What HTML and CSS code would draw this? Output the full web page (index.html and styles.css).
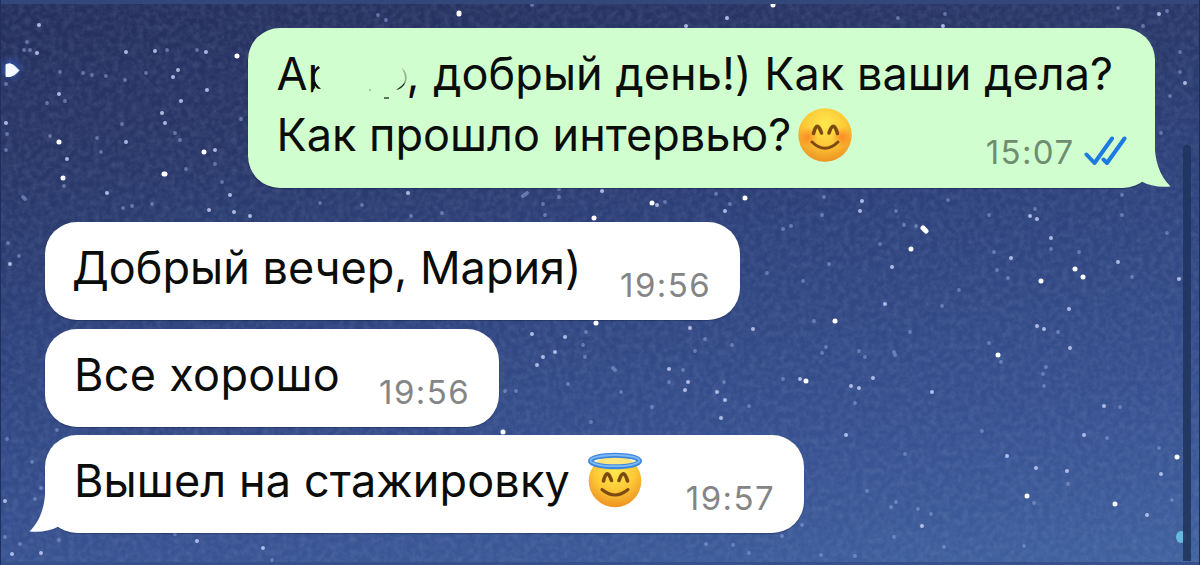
FILE: index.html
```
<!DOCTYPE html>
<html lang="ru">
<head>
    <meta charset="UTF-8">
    <meta name="viewport" content="width=device-width, initial-scale=1.0">
    <title>Chat</title>
    <link rel="stylesheet" href="styles.css">
</head>
<body>
    <svg class="sky" viewBox="0 0 1200 565">
        <defs>
            <filter id="grain" x="0" y="0" width="100%" height="100%">
                <feTurbulence type="fractalNoise" baseFrequency="0.16" numOctaves="3" seed="4"/>
                <feColorMatrix values="0 0 0 0 0.4  0 0 0 0 0.48  0 0 0 0 0.7  0.9 0 0 0 -0.3"/>
            </filter>
            <filter id="soft"><feGaussianBlur stdDeviation="0.7"/></filter>
            <filter id="glow" x="-100%" y="-100%" width="300%" height="300%"><feGaussianBlur stdDeviation="3"/></filter>
        </defs>
        <rect width="1200" height="565" filter="url(#grain)" opacity="0.3"/>
        <g filter="url(#soft)">
            <path class="star dim" d="M27 42h0M30 50h0M24 50h0M60 72h0M92 75h0M83 73h0M106 76h0M146 73h0M125 80h0M122 124h0M101 152h0M97 138h0M50 136h0M47 103h0M65 101h0M241 119h0M180 140h0M175 133h0M186 169h0M215 164h0M222 182h0M6 84h0M7 134h0M6 150h0M23 197l2 2M132 206h0M123 208h0M152 204h0M64 186h0M197 50h0M167 50h0M8 243h0M19 256h0M362 205h0M320 203h0M442 213h0M543 204h0M559 197h0M559 189h0M545 215h0M665 202h0M716 194h0M730 204h0M411 216h0M523 196l4 -3M783 229h0M791 226h0M613 368l2 2M586 332h0M583 345h0M652 407h0M591 422h0M749 406h0M724 382h0M669 382h0M683 370h0M783 379h0M705 339h0M695 351h0M732 345h0M505 391h0M516 391h0M621 392h0M568 384h0M585 357h0"/>
            <path class="star dim" d="M824 197h0M822 215h0M896 211h0M904 225h0M916 226h0M948 200h0M989 215h0M1035 209h0M1122 195h0M1122 215h0M1167 233h0M1079 252h0M994 252h0M997 270h0M1008 278h0M1051 249h0M959 290h0M942 306h0M767 273h0M803 281h0M814 321h0M826 347h0M822 353h0M859 351h0M865 357h0M910 332h0M894 352l1 3M989 343h0M1001 362h0M1058 332h0M1046 367h0M1043 374h0M1044 386h0M855 403h0M1120 407h0M982 431h0M1107 438h0M1159 448h0M905 454h0M867 491h0M896 502h0M891 507h0M918 509h0M931 514h0M894 537h0M944 547h0M1024 546h0M782 536h0M802 525h0M749 553h0M855 556h0M821 555h0M1034 503h0M1068 484h0M1172 500h0M1132 277h0M880 244h0M829 264h0M7 439h0M57 430h0M32 462h0M41 488h0M35 499h0M20 544h0M59 540h0M272 560h0M5 537h0M175 534h0M706 544h0M733 545h0M1167 11h0M1143 26h0M1180 52h0M1180 72h0M1170 96h0M1161 133h0M378 15h0M386 20h0M532 5h0M1118 8h0M945 14h0M898 18h0"/>
            <path class="star mid" d="M39 25h0M37 53h0M126 52h0M155 51h0M206 52h0M178 70h0M173 77h0M59 94h0M162 113h0M165 123h0M126 142h0M67 159h0M215 150h0M207 90h0M181 101h0M230 195h0M107 193h0M6 123h0M209 210h0M250 216h0M234 212h0M10 264h0M602 191h0M657 205h0M725 211h0M408 193h0M565 337h0M543 357h0M537 365h0M555 352h0M532 334h0M669 369h0M688 382h0M685 390h0M717 392h0M725 400h0M721 418h0M753 329h0M690 328h0M862 201h0M860 211h0M1011 258h0M1051 238h0M892 267h0M885 304h0M800 379h0M873 378h0M851 386h0M859 388h0M932 392h0M1037 326h0M1044 329h0M1070 348h0M1069 309h0M1104 406h0M1084 435h0M1007 456h0M1067 471h0M1036 468h0M1161 474h0M922 526h0M1147 515h0M846 435h0M1179 279h0M1118 262h0M1037 219h0M1030 216h0M5 501h0M12 554h0M41 553h0M197 541h0M263 548h0M1159 14h0M1185 83h0M727 18h0M686 26h0M943 26h0"/>
            <path class="star bright" d="M164 174l1 0M63 178h0M59 142h0M237 56h0M204 152h0M652 203h0M594 218h0M745 198h0M596 323h0M503 432h0M806 381h0M923 228l3 3M911 249h0M1041 281h0M1075 269h0M1083 277h0M835 321h0M998 355h0M1027 496h0M1115 504h0M1177 457h0M459 13l0 1M773 5h0"/>
        </g>
        <circle cx="11" cy="69" r="9" fill="#2d62c8" opacity="0.6" filter="url(#glow)"/>
        <path d="M6 64.500q4 -2 8 1l5 5l-4 4q-5 3 -9 2z" fill="#f4f8ff" stroke="#f4f8ff" stroke-width="1" stroke-linejoin="round"/>
        <ellipse cx="1181" cy="537" rx="5" ry="6" fill="#6bc3e3" opacity="0.9" filter="url(#soft)"/>
    </svg>
    <div class="edge edge-top"></div>
    <div class="edge edge-bottom"></div>
    <div class="edge edge-left"></div>
    <div class="edge edge-right"></div>
    <div class="scrollbar"></div>

    <div class="chat">
        <div class="mes out">
            <p class="line l1">Ар<span class="erased"><svg viewBox="0 0 90 50" width="90" height="50">
                <path d="M1 8H86V50H-12V38.500L-4 37L-3 33.500L4 34Q-2 29 -2 23Q-2 16 3 13L-1 8z" fill="#d0fecf"/>
                <path d="M84 12Q92 19 89 27Q86 34 79 35Q87 31 88 24Q88 18 84 12z" fill="#8fb58f"/>
                <path d="M88.500 27Q86 33.500 79 35Q85 31 88.500 27z" fill="#1c2a1c"/>
                <path d="M67 43h5" stroke="#3d5a3d" stroke-width="1.600"/>
                <circle cx="53" cy="35" r="0.900" fill="#8db38d"/>
            </svg></span>, <span class="l1b">добрый день!) Как ваши дела?</span></p>
            <p class="line l2">Как прошло интервью?</p>
            <svg class="emoji e1" viewBox="0 0 54 54">
                <defs>
                    <radialGradient id="face" cx="0.5" cy="0.3" r="0.7">
                        <stop offset="0" stop-color="#ffe94f"/>
                        <stop offset="0.55" stop-color="#fdc937"/>
                        <stop offset="1" stop-color="#ee9322"/>
                    </radialGradient>
                    <radialGradient id="blush">
                        <stop offset="0" stop-color="#f8691c" stop-opacity="0.65"/>
                        <stop offset="1" stop-color="#f8691c" stop-opacity="0"/>
                    </radialGradient>
                </defs>
                <circle cx="27" cy="27" r="26.7" fill="url(#face)"/>
                <circle cx="10" cy="29" r="10" fill="url(#blush)"/>
                <circle cx="44" cy="29" r="10" fill="url(#blush)"/>
                <path d="M15.500 25.500Q19 11.500 23.500 25M31 25Q35.500 11.500 39.500 25.500" class="feature"/>
                <path d="M14 34Q27 46.500 40 34" class="feature mouth"/>
            </svg>
            <div class="meta">
                <span class="time">15:07</span>
                <svg class="ticks" viewBox="0 0 44 30" width="44" height="30"><path d="M2.500 18.500L10.500 27L28 2.500M19.500 23.500L23 27L40.500 2.500"/></svg>
            </div>
            <svg class="tail tail-out" viewBox="0 0 32 48" width="32" height="48"><path d="M15.500 0C15.500 20 20 35 31.500 46.500Q14 48 2 41.300L0 10z"/></svg>
        </div>

        <div class="mes in m2">
            <p class="line l3">Добрый вечер, Мария)</p>
            <div class="meta"><span class="time">19:56</span></div>
        </div>
        <div class="mes in m3">
            <p class="line l4">Все хорошо</p>
            <div class="meta"><span class="time">19:56</span></div>
        </div>
        <div class="mes in m4">
            <p class="line l5">Вышел на стажировку</p>
            <svg class="emoji e2" viewBox="0 0 54 56">
                <circle cx="27" cy="29" r="26.300" fill="url(#face)"/>
                <ellipse cx="27" cy="9" rx="24.500" ry="5.800" fill="#fff2a8" fill-opacity="0.6" stroke="#3f86dd" stroke-width="5"/>
                <ellipse cx="27" cy="8.600" rx="24.500" ry="5.600" fill="none" stroke="#7dbbf7" stroke-width="1.800"/>
                <path d="M15.500 29Q19 15 23.500 28.500M31 28.500Q35.500 15 39.500 29" class="feature"/>
                <path d="M14 37.500Q27 48.500 40 37.500" class="feature mouth"/>
            </svg>
            <div class="meta"><span class="time">19:57</span></div>
            <svg class="tail tail-in" viewBox="0 0 32 48" width="32" height="48"><path d="M16.500 0C16.500 20 12 35 0.500 46.500Q18 48 30 41.300L32 10z"/></svg>
        </div>
    </div>
</body>
</html>
```
FILE: styles.css
```
*{
    box-sizing: border-box;
}
body{
    margin: 0;
    width: 1200px;
    height: 565px;
    overflow: hidden;
    position: relative;
    font-family: Inter, "Liberation Sans", sans-serif;
    color: #0a0d0a;
    background: linear-gradient(172deg, #262f5e 0%, #293869 25%, #2f447f 50%, #385392 78%, #40629f 100%);
}
.sky{
    position: absolute;
    top: 0;
    left: 0;
    width: 1200px;
    height: 565px;
}
.star{
    fill: none;
    stroke-linecap: round;
}
.dim{
    stroke: #8b9dd4;
    stroke-width: 3.8px;
    opacity: 0.6;
}
.mid{
    stroke: #c3cdf4;
    stroke-width: 4px;
    opacity: 0.85;
}
.bright{
    stroke: #ffffff;
    stroke-width: 5px;
}

/* thin frame round the wallpaper */
.edge{
    position: absolute;
}
.edge-top{
    top: 0;
    left: 0;
    right: 0;
    height: 4px;
    background: #33477a;
}
.edge-bottom{
    bottom: 0;
    left: 0;
    right: 0;
    height: 3px;
    background: #36508c;
}
.edge-left{
    top: 0;
    bottom: 0;
    left: 0;
    width: 1px;
    background: #1f3060;
}
.edge-right{
    top: 0;
    bottom: 0;
    right: 0;
    width: 1px;
    background: #1c2c5e;
}
.scrollbar{
    position: absolute;
    top: 145px;
    right: 9px;
    width: 8px;
    height: 416px;
    border-radius: 4px 4px 0 0;
    background: #20345f;
    opacity: 0.9;
}

.chat{
    position: relative;
    display: flex;
    flex-direction: column;
    align-items: flex-start;
    padding: 27.5px 45.5px 0 45px;
}
.mes{
    position: relative;
    display: flex;
    border-radius: 32px;
    background: #fff;
    box-shadow: 0 1px 1px rgba(10, 20, 50, 0.35);
}
.in{
    height: 98px;
    padding: 15px 29px 0 29px;
    justify-content: space-between;
}
.out{
    align-self: flex-end;
    width: 907px;
    height: 160px;
    padding: 15px 27px 0 29px;
    flex-wrap: wrap;
    align-content: flex-start;
    background: #d0fecf;
}
.m2{
    width: 695px;
    margin-top: 34px;
    padding-left: 27px;
}
.m3{
    width: 454px;
    margin-top: 9px;
}
.m4{
    width: 759px;
    margin-top: 8.5px;
}
.line{
    margin: 0;
    font-size: 45px;
    line-height: 61.5px;
    white-space: nowrap;
}
.l1{
    width: 100%;
}
.l1b{
    margin-left: 1px;
    letter-spacing: 0.06px;
}
.l4{
    letter-spacing: 0.3px;
}
.l5{
    letter-spacing: 0.12px;
}
.erased{
    position: relative;
    display: inline-block;
    width: 71.5px;
}
.erased svg{
    position: absolute;
    left: -18px;
    top: -35px;
    overflow: visible;
}
.meta{
    display: flex;
    margin-left: auto;
    padding-top: 28px;
    height: 61px;
}
.time{
    font-size: 33px;
    line-height: 40px;
    letter-spacing: 1.4px;
    color: #858585;
}
.out .time{
    color: #6f8d6f;
}
.ticks{
    margin: 4px 0 0 9px;
}
.ticks path{
    fill: none;
    stroke: #1c7ae0;
    stroke-width: 4px;
    stroke-linecap: round;
    stroke-linejoin: round;
}
.emoji{
    width: 54px;
    height: 54px;
    flex: none;
}
.e1{
    margin: 4px 0 0 7px;
}
.e2{
    height: 56px;
    margin: 2px 0 0 18px;
}
.feature{
    fill: none;
    stroke: #7d4a10;
    stroke-width: 3.6px;
    stroke-linecap: round;
}
.mouth{
    stroke-width: 3px;
}
.tail{
    position: absolute;
}
.tail path{
    fill: #fff;
}
.tail-out{
    right: -16.5px;
    bottom: 0;
}
.tail-out path{
    fill: #d0fecf;
}
.tail-in{
    left: -16.5px;
    bottom: 0;
}
```
